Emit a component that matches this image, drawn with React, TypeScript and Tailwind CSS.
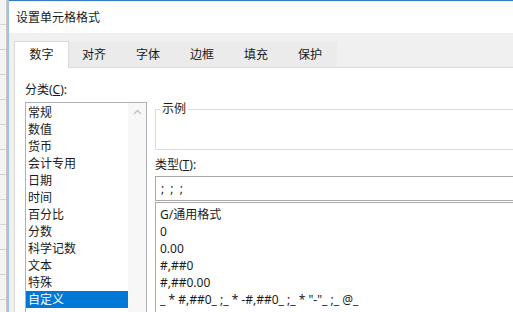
import React from "react";

const categories = ["常规", "数值", "货币", "会计专用", "日期", "时间", "百分比", "分数", "科学记数", "文本", "特殊", "自定义"];
const formats = ["G/通用格式", "0", "0.00", "#,##0", "#,##0.00", '_ * #,##0_ ;_ * -#,##0_ ;_ * "-"_ ;_ @_'];
const tabs = ["对齐", "字体", "边框", "填充", "保护"];

const App = () => {
  return (
    <div className="w-[513px] h-[312px] overflow-hidden flex bg-[#f3f3f3] font-['Noto_Sans','Noto_Sans_CJK_SC',sans-serif] text-[12px] text-[#1a1a1a]">
      {/* sheet behind the dialog */}
      <div className="w-[7px] border-r border-[#c8c8c8] flex flex-col">
        {Array.from({ length: 14 }).map((_, i) => (
          <div key={i} className="h-[25px] shrink-0 border-b border-[#d4d4d4]" />
        ))}
      </div>
      <div className="w-[2px] bg-[#9cc2e8]" />

      {/* dialog */}
      <div className="flex-1 flex flex-col border-t border-[#3a78c3]">
        <div className="h-[32px] bg-white border-t border-[#fbeedd] flex items-center pl-[7px] text-[12px]">
          设置单元格格式
        </div>
        <div className="flex-1 flex flex-col bg-[#f0f0f0] pl-[5px] pt-[7px]">
          <div className="h-[27px] flex items-end">
            <div className="w-[55px] h-[27px] bg-white border border-b-0 border-[#dadada] flex items-center justify-center relative z-10 -mb-px">
              数字
            </div>
            <div className="flex -ml-[2px] bg-[#ebebeb] h-[25px]">
              {tabs.map((t) => (
                <div key={t} className="w-[54px] flex items-center justify-center">
                  {t}
                </div>
              ))}
            </div>
          </div>
          <div className="flex-1 bg-white border-l border-t border-[#dadada] flex pl-[10px] pt-[14px]">
            <div className="w-[122px] flex flex-col">
              <div className="h-[20px] leading-[16px]">
                分类(<span className="underline">C</span>):
              </div>
              <div className="flex-1 border border-[#aeb2b8] border-b-0 flex">
                <div className="flex-1 flex flex-col pt-[1px]">
                  {categories.map((c, i) => (
                    <div
                      key={c}
                      className={
                        "h-[17px] leading-[17px] pl-[2px] " +
                        (i === categories.length - 1 ? "bg-[#0078d7] text-white" : "")
                      }
                    >
                      {c}
                    </div>
                  ))}
                </div>
                <div className="w-[18px] bg-[#f7f7f7] flex justify-center pt-[6px]">
                  <svg width="9" height="6" viewBox="0 0 9 6">
                    <path d="M1 5 L4.5 1.5 L8 5" fill="none" stroke="#c2c2c2" strokeWidth="1.3" />
                  </svg>
                </div>
              </div>
            </div>

            <div className="flex-1 flex flex-col ml-[8px]">
              <div className="relative h-[41px] mt-[27px] shrink-0 border border-[#dcdcdc] border-r-0">
                <span className="absolute -top-[8px] left-[4px] bg-white px-[2px] leading-[14px]">示例</span>
              </div>
              <div className="h-[24px] shrink-0 leading-[16px] pt-[7px]">
                类型(<span className="underline">T</span>):
              </div>
              <div className="h-[25px] shrink-0 mt-[2px] border border-[#a9a9a9] border-r-0 flex items-center pl-[5px] tracking-[1.5px]">
                ; ; ;
              </div>
              <div className="flex-1 mt-[1px] border-l border-t border-[#a9a9a9] pt-[3px] pl-[4px]">
                {formats.map((f) => (
                  <div key={f} className="h-[17px] leading-[17px] whitespace-pre">
                    {f}
                  </div>
                ))}
              </div>
            </div>
          </div>
        </div>
      </div>
    </div>
  );
};

export default App;
